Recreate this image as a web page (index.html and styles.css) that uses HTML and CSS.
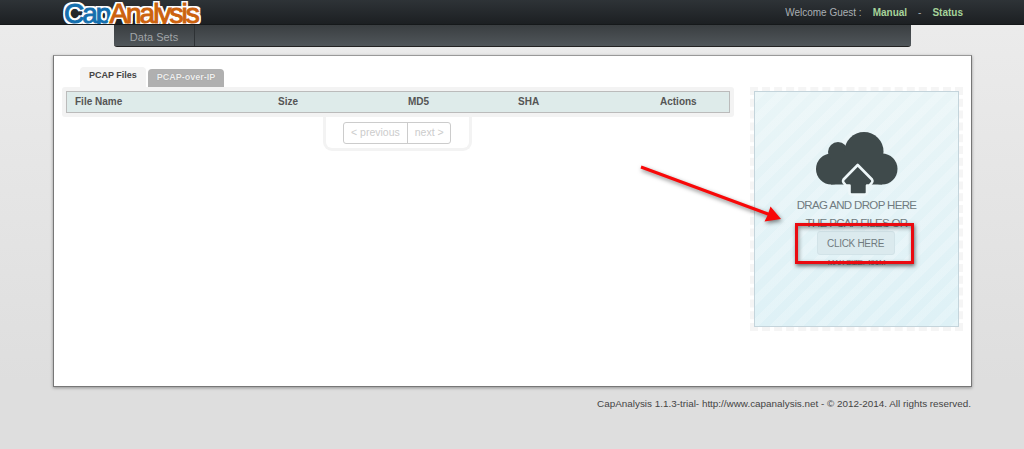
FILE: index.html
```html
<!DOCTYPE html>
<html lang="en">
<head>
  <meta charset="UTF-8" />
  <title>CapAnalysis</title>
  <link rel="stylesheet" href="styles.css">
</head>
<body>

<header class="topbar">
  <div class="logo"><span class="logo-cap">Cap</span><span class="logo-analysis">Analysis</span></div>
  <div class="userinfo">
    <span>Welcome Guest :</span>
    <a href="#">Manual</a>
    <span>-</span>
    <a href="#">Status</a>
  </div>
</header>

<nav class="menu">
  <a href="#" class="menu-item">Data Sets</a>
</nav>

<main class="content">
  <section class="files">
    <div class="tabs">
      <a href="#" class="tab active">PCAP Files</a>
      <a href="#" class="tab">PCAP-over-IP</a>
    </div>
    <div class="table-wrap">
      <div class="table-head">
        <span>File Name</span>
        <span>Size</span>
        <span>MD5</span>
        <span>SHA</span>
        <span>Actions</span>
      </div>
    </div>
    <div class="pager-wrap">
      <div class="pager">
        <a href="#">&lt; previous</a>
        <a href="#">next &gt;</a>
      </div>
    </div>
  </section>

  <aside class="dropzone-wrap">
    <div class="dropzone">
      <svg class="cloud" width="82" height="64" viewBox="0 0 82 64">
        <g fill="#3f4a4b">
          <circle cx="15.5" cy="37" r="15.5"/>
          <circle cx="22" cy="20" r="10"/>
          <circle cx="48" cy="19.5" r="19.5"/>
          <circle cx="66" cy="37" r="15.5"/>
          <rect x="15" y="20" width="51" height="32.5"/>
        </g>
        <!-- upload arrow, the pale stroke cuts it out of the cloud -->
        <path d="M41.7 33 L27.5 47.5 Q26.5 49 27.5 50.5 L30 53.5 L33.5 53.5 L33.5 60.5 Q33.5 62.5 35.5 62.5 L49 62.5 Q51 62.5 51 60.5 L51 53.5 L53.5 53.5 L56 50.5 Q57 49 56 47.5 Z" fill="#3f4a4b" stroke="#eef7f9" stroke-width="2.6" stroke-linejoin="round"/>
      </svg>
      <p class="drop-text">DRAG AND DROP HERE</p>
      <p class="drop-text">THE PCAP FILES OR</p>
      <a href="#" class="click-btn">CLICK HERE</a>
      <p class="max-size">MAX SIZE: 491M</p>
    </div>
  </aside>
</main>

<footer class="footer">CapAnalysis 1.1.3-trial- http://www.capanalysis.net - © 2012-2014. All rights reserved.</footer>

<!-- red callout drawn on top of the page -->
<svg class="callout" width="1024" height="449" viewBox="0 0 1024 449">
  <polygon points="641.5,165.6 768.5,212.6 770.5,206.5 781,219 764.5,221.5 767.5,215.4 640.5,168.4" fill="#f80808"/>
</svg>
<div class="callout-box"></div>

</body>
</html>
```

FILE: styles.css
```css
* {
  box-sizing: border-box;
}
html, body {
  height: 100%;
}
body {
  margin: 0;
  overflow: hidden;
  font-family: "Liberation Sans", Arial, sans-serif;
  font-size: 11px;
  color: #444;
  background: linear-gradient(#ececec, #dedede 85%);
}
a {
  text-decoration: none;
  color: inherit;
}
p {
  margin: 0;
}

/* top bar */
.topbar {
  height: 25px;
  padding: 0 61px 0 64px;
  display: flex;
  justify-content: space-between;
  overflow: hidden;
  background: linear-gradient(#2e3337, #1c1f22);
  border-bottom: 1px solid #15181a;
}
.logo {
  font-size: 28px;
  line-height: 30px;
  margin-top: -1px;
  letter-spacing: -2px;
  text-shadow:
    2px 0 0 #fff, -2px 0 0 #fff, 0 2px 0 #fff, 0 -2px 0 #fff,
    2px 2px 0 #fff, -2px 2px 0 #fff, 2px -2px 0 #fff, -2px -2px 0 #fff;
}
.logo-cap {
  color: #146fae;
  -webkit-text-stroke: 1px #146fae;
}
.logo-analysis {
  color: #cc620e;
  -webkit-text-stroke: 1px #cc620e;
}
.userinfo {
  display: flex;
  gap: 11px;
  padding-top: 7px;
  font-size: 10px;
  color: #a9afb3;
}
.userinfo a {
  color: #a6d39a;
  font-weight: bold;
}

/* menu */
.menu {
  height: 22px;
  margin: 0 113px 0 114px;
  display: flex;
  background: linear-gradient(#3a3e41, #50565a);
  border-bottom: 1px solid #222;
  border-radius: 0 0 3px 3px;
}
.menu-item {
  width: 81px;
  padding-top: 1px;
  text-align: center;
  line-height: 23px;
  color: #a0a4a7;
  border-right: 1px solid #2e3235;
  font-size: 11px;
}

/* main box */
.content {
  height: 332px;
  margin: 8px 52px 0 53px;
  padding: 12px 8px 0 8px;
  display: flex;
  justify-content: space-between;
  background: #fff;
  border: 1px solid #777;
  border-top-color: #999;
  box-shadow: 0 1px 3px rgba(0, 0, 0, 0.35);
}
.files {
  width: 672px;
}
.tabs {
  display: flex;
  align-items: flex-end;
  height: 19px;
  margin-left: 18px;
  gap: 2px;
}
.tab {
  padding: 0 9px;
  height: 18px;
  line-height: 17px;
  font-size: 9px;
  font-weight: bold;
  color: #eee;
  background: #b0b0b0;
  border-radius: 4px 4px 0 0;
  text-shadow: 0 0 1px #888;
}
.tab.active {
  height: 20px;
  color: #444;
  background: #f3f3f3;
  text-shadow: none;
}
.table-wrap {
  padding: 4px;
  background: #f3f3f3;
  border-radius: 3px;
}
.table-head {
  height: 22px;
  line-height: 19px;
  font-weight: bold;
  font-size: 10px;
  color: #555;
  background: #deebea;
  border: 1px solid #bbb;
  display: grid;
  grid-template-columns: 203px 130px 110px 142px 1fr;
  padding-left: 8px;
}
.pager-wrap {
  width: 149px;
  height: 34px;
  margin-left: 261px;
  padding: 5px 0 0 17px;
  background: #fff;
  border: 3px solid #f3f3f3;
  border-top: 0;
  border-radius: 0 0 9px 9px;
}
.pager {
  display: flex;
  height: 22px;
  width: 108px;
  font-size: 10.5px;
  line-height: 19px;
  white-space: nowrap;
  color: #ccc;
  border: 1px solid #ccc;
  border-radius: 3px;
}
.pager a {
  padding: 0 7px;
}
.pager a + a {
  border-left: 1px solid #ccc;
}

/* upload area */
.dropzone-wrap {
  width: 213px;
  height: 244px;
  margin-top: 19px;
  border: 4px dashed #f5f5f5;
}
.dropzone {
  height: 236px;
  padding-top: 40px;
  display: flex;
  flex-direction: column;
  align-items: center;
  border: 1px solid #c4d4db;
  color: #707b80;
  background:
    repeating-linear-gradient(135deg, rgba(255, 255, 255, 0.2) 0 8px, transparent 8px 16px),
    linear-gradient(#e9f5f7, #def1f6);
}
.cloud {
  display: block;
}
.drop-text {
  font-size: 11.5px;
  line-height: 18px;
  letter-spacing: -0.65px;
}
.click-btn {
  width: 78px;
  height: 24px;
  margin: -1px 2px 0 0;
  text-align: center;
  line-height: 23px;
  font-size: 10px;
  letter-spacing: -0.3px;
  background: #dbeaee;
  border: 1px solid #d2e3e8;
  border-radius: 3px;
}
.max-size {
  font-size: 8px;
  line-height: 15px;
  letter-spacing: -0.3px;
}

.footer {
  margin: 11px 53px 0 0;
  text-align: right;
  font-size: 9.9px;
  color: #444;
}

/* annotation layer */
.callout {
  position: absolute;
  top: 0;
  left: 0;
  filter: drop-shadow(1px 2px 2px rgba(0, 0, 0, 0.5));
}
.callout-box {
  position: absolute;
  left: 795px;
  top: 223px;
  width: 119px;
  height: 41px;
  border: 3px solid #ea0a10;
  box-shadow: 1px 2px 4px rgba(0, 0, 0, 0.55), inset 1px 2px 4px rgba(0, 0, 0, 0.4);
}
```
